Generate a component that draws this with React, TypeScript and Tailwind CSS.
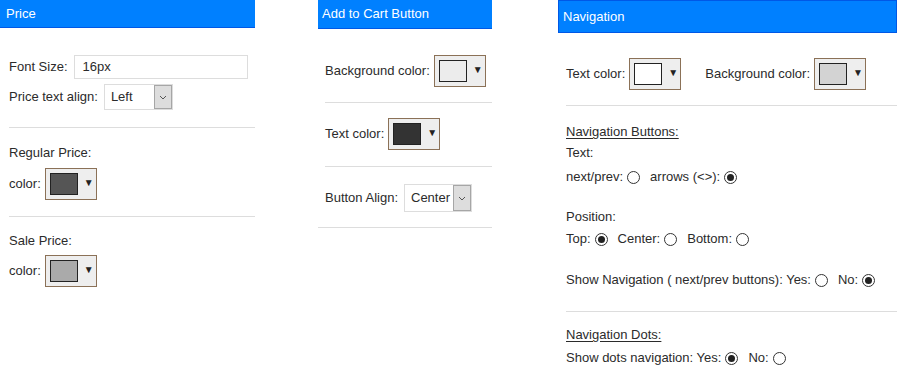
import React from "react";

const font = { fontFamily: '"Liberation Sans", Arial, sans-serif' };

function Header({ title, className }: { title: string; className: string }) {
  return (
    <div className={`flex items-center bg-[#0080ff] text-[13px] text-white ${className}`}>
      {title}
    </div>
  );
}

function Swatch({ fill }: { fill: string }) {
  return (
    <div className="ml-[4px] flex h-[32px] w-[52px] items-start border border-[#8b7157] bg-[#eeeeee] pl-[4px] pt-[4px]">
      <div className="h-[22px] w-[28px] border border-[#222]" style={{ background: fill }} />
      <span className="ml-[6px] mt-[3px] text-[10px] leading-[14px] text-[#222]">▼</span>
    </div>
  );
}

function Select({ value, w, h }: { value: string; w: string; h: string }) {
  return (
    <div className={`ml-[6px] flex border border-[#dddddd] bg-white ${w} ${h}`}>
      <div className="flex flex-1 items-center pl-[6px] text-[13px]">{value}</div>
      <div className="flex w-[18px] items-center justify-center border border-[#a6a6a6] bg-[#dddddd]">
        <svg width="8" height="5" viewBox="0 0 8 5">
          <polyline points="1,1 4,4 7,1" fill="none" stroke="#555" strokeWidth="1" />
        </svg>
      </div>
    </div>
  );
}

function Radio({ on }: { on?: boolean }) {
  return (
    <span className="ml-[4px] mr-[10px] inline-flex h-[13px] w-[13px] items-center justify-center rounded-full border-[1.5px] border-[#333] bg-white">
      {on && <span className="h-[7px] w-[7px] rounded-full bg-[#222]" />}
    </span>
  );
}

export default function App() {
  return (
    <div className="flex h-[374px] w-[897px] items-start overflow-hidden bg-white text-[13px] text-[#2b2b2b]" style={font}>
      {/* Price */}
      <div className="w-[255px] shrink-0">
        <Header title="Price" className="h-[28px] border-b border-[#0058e6] pl-[6px]" />
        <div className="pl-[9px]">
          <div className="mt-[27px] flex h-[24px] items-center">
            <span>Font Size:</span>
            <div className="ml-[6px] flex h-[24px] w-[174px] items-center border border-[#dddddd] pl-[8px]">16px</div>
          </div>
          <div className="mt-[5px] flex items-center">
            <span>Price text align:</span>
            <Select value="Left" w="w-[69px]" h="h-[26px]" />
          </div>
          <div className="mt-[17px] border-t border-[#dddddd]" />
          <div className="mt-[17px] leading-[16px]">Regular Price:</div>
          <div className="mt-[7px] flex items-center">
            <span>color:</span>
            <Swatch fill="#555555" />
          </div>
          <div className="mt-[16px] border-t border-[#dddddd]" />
          <div className="mt-[16px] leading-[16px]">Sale Price:</div>
          <div className="mt-[6px] flex items-center">
            <span>color:</span>
            <Swatch fill="#aaaaaa" />
          </div>
        </div>
      </div>

      {/* Add to Cart Button */}
      <div className="ml-[63px] w-[174px] shrink-0 border-b border-[#dddddd]">
        <Header title="Add to Cart Button" className="h-[29px] border-b border-[#0058e6] pl-[4px]" />
        <div className="pl-[7px]">
          <div className="flex items-center border-b border-[#dddddd] pb-[15px] pt-[26px]">
            <span>Background color:</span>
            <Swatch fill="#ececec" />
          </div>
          <div className="flex items-center border-b border-[#dddddd] pb-[16px] pt-[15px]">
            <span>Text color:</span>
            <Swatch fill="#333333" />
          </div>
          <div className="flex items-center pb-[15px] pt-[17px]">
            <span>Button Align:</span>
            <Select value="Center" w="w-[68px]" h="h-[28px]" />
          </div>
        </div>
      </div>

      {/* Navigation */}
      <div className="ml-[66px] flex-1">
        <Header title="Navigation" className="h-[33px] border border-[#0058e6] pl-[4px]" />
        <div className="pl-[8px]">
          <div className="flex items-center border-b border-[#dddddd] pb-[15px] pt-[25px]">
            <span>Text color:</span>
            <Swatch fill="#ffffff" />
            <span className="ml-[24px]">Background color:</span>
            <Swatch fill="#d3d3d3" />
          </div>
          <div className="mt-[18px] leading-[16px] underline underline-offset-2">Navigation Buttons:</div>
          <div className="mt-[5px] leading-[16px]">Text:</div>
          <div className="mt-[8px] flex h-[16px] items-center">
            next/prev:<Radio />arrows (&lt;&gt;):<Radio on />
          </div>
          <div className="mt-[24px] leading-[16px]">Position:</div>
          <div className="mt-[6px] flex h-[16px] items-center">
            Top:<Radio on />Center:<Radio />Bottom:<Radio />
          </div>
          <div className="mt-[25px] flex h-[16px] items-center">
            Show Navigation ( next/prev buttons): Yes:<Radio />No:<Radio on />
          </div>
          <div className="mt-[23px] border-t border-[#dddddd]" />
          <div className="mt-[15px] leading-[16px] underline underline-offset-2">Navigation Dots:</div>
          <div className="mt-[7px] flex h-[16px] items-center">
            Show dots navigation: Yes:<Radio on />No:<Radio />
          </div>
        </div>
      </div>
    </div>
  );
}
